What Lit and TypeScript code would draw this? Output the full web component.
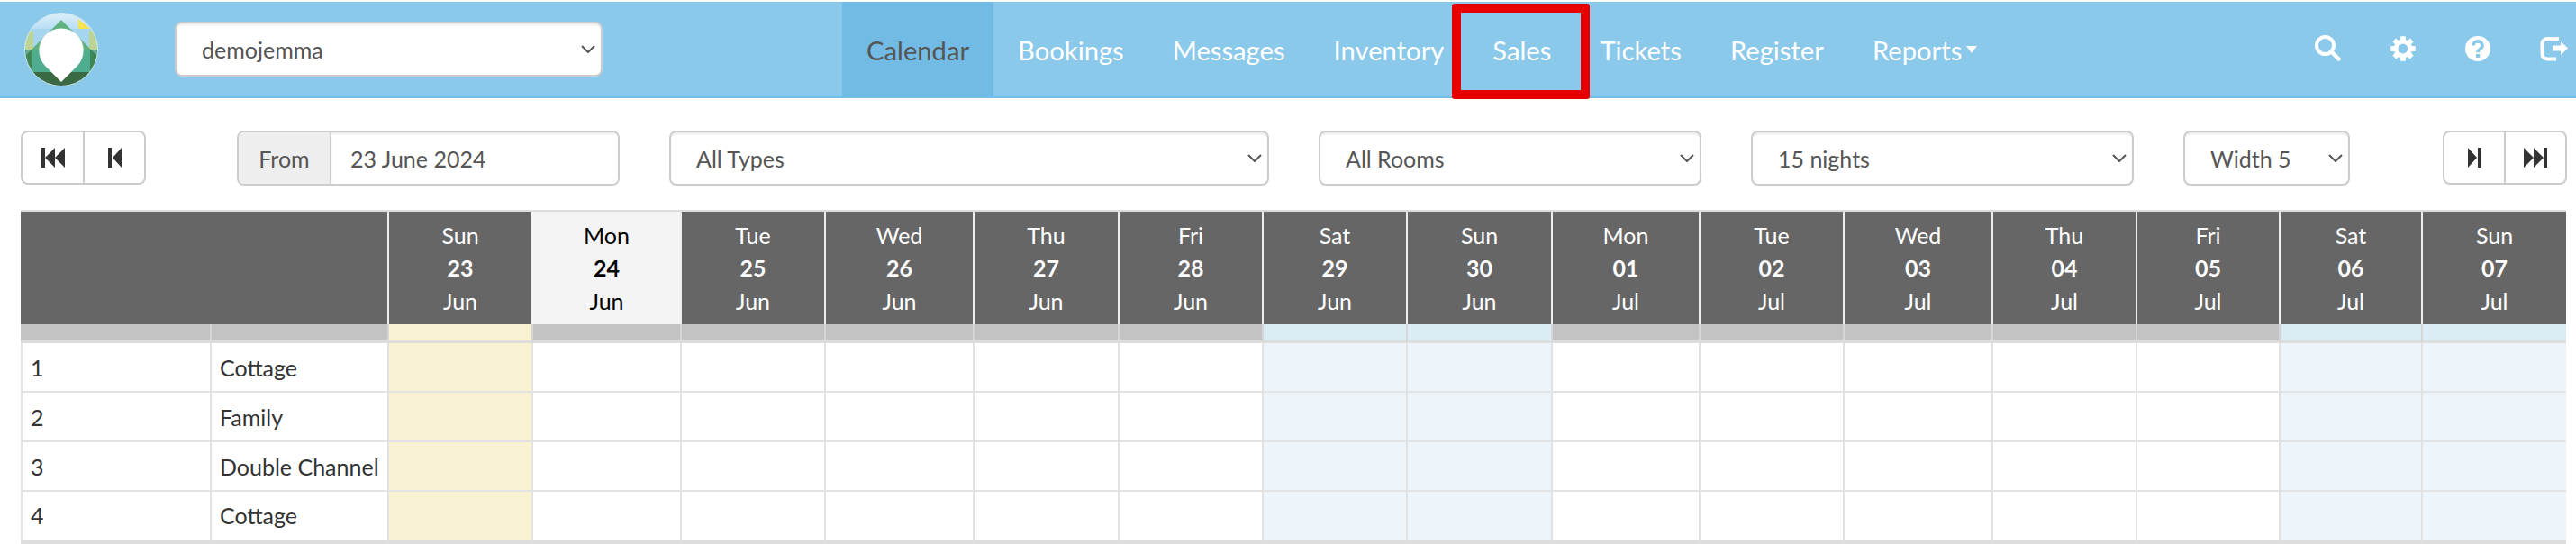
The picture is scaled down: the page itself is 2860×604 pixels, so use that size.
import { LitElement, html, css, svg } from 'lit';
import { customElement } from 'lit/decorators.js';

const NAV = ['Calendar', 'Bookings', 'Messages', 'Inventory', 'Sales', 'Tickets', 'Register', 'Reports'];

// Column widths, measured from the screen
const ROOM_WIDTHS = [210, 197];
const DAYS = [
	{ dow: 'Sun', num: '23', mon: 'Jun', w: 160, kind: 'first' },
	{ dow: 'Mon', num: '24', mon: 'Jun', w: 165, kind: 'today' },
	{ dow: 'Tue', num: '25', mon: 'Jun', w: 160, kind: '' },
	{ dow: 'Wed', num: '26', mon: 'Jun', w: 165, kind: '' },
	{ dow: 'Thu', num: '27', mon: 'Jun', w: 161, kind: '' },
	{ dow: 'Fri', num: '28', mon: 'Jun', w: 160, kind: '' },
	{ dow: 'Sat', num: '29', mon: 'Jun', w: 160, kind: 'weekend' },
	{ dow: 'Sun', num: '30', mon: 'Jun', w: 161, kind: 'weekend' },
	{ dow: 'Mon', num: '01', mon: 'Jul', w: 164, kind: '' },
	{ dow: 'Tue', num: '02', mon: 'Jul', w: 160, kind: '' },
	{ dow: 'Wed', num: '03', mon: 'Jul', w: 165, kind: '' },
	{ dow: 'Thu', num: '04', mon: 'Jul', w: 160, kind: '' },
	{ dow: 'Fri', num: '05', mon: 'Jul', w: 159, kind: '' },
	{ dow: 'Sat', num: '06', mon: 'Jul', w: 158, kind: 'weekend' },
	{ dow: 'Sun', num: '07', mon: 'Jul', w: 161, kind: 'weekend' },
];
const ROOMS = [
	{ id: '1', type: 'Cottage' },
	{ id: '2', type: 'Family' },
	{ id: '3', type: 'Double Channel' },
	{ id: '4', type: 'Cottage' },
];

// Builds the outline of the settings cog
const cogPath = () => {
	const cx = 14, cy = 14, teeth = 8;
	let d = '';
	for (let i = 0; i < teeth; i++) {
		const a = (i * 2 * Math.PI) / teeth - Math.PI / 2;
		const pts: [number, number][] = [
			[10.2, -0.3], [14, -0.19], [14, 0.19], [10.2, 0.3],
		];
		pts.forEach(([r, o], j) => {
			const x = (cx + r * Math.cos(a + o)).toFixed(2);
			const y = (cy + r * Math.sin(a + o)).toFixed(2);
			d += `${i === 0 && j === 0 ? 'M' : 'L'}${x} ${y} `;
		});
	}
	d += 'Z M19.4 14 A5.4 5.4 0 1 0 8.6 14 A5.4 5.4 0 1 0 19.4 14 Z';
	return d;
};

const chevron = html`<svg class="chevron" viewBox="0 0 16 9" width="16" height="9">
	<path d="M1 1 L8 8 L15 1" fill="none" stroke="#555" stroke-width="2"></path>
</svg>`;

const stepIcon = (flip: boolean) => html`<svg class="skip ${flip ? 'flip' : ''}" viewBox="0 0 15 22" width="15" height="22">
	<path d="M0 0 L10 11 L0 22 Z M11 0 H15 V22 H11 Z" fill="#333"></path>
</svg>`;

const fastIcon = (flip: boolean) => html`<svg class="skip ${flip ? 'flip' : ''}" viewBox="0 0 26 22" width="26" height="22">
	<path d="M0 0 L11 11 L0 22 Z M11 0 L22 11 L11 22 Z M22 0 H26 V22 H22 Z" fill="#333"></path>
</svg>`;

@customElement('app-root')
export class AppRoot extends LitElement {
	static styles = css`
		:host {
			display: block;
			padding-top: 2px;
			background: #fff;
			font-family: Lato, "Open Sans", sans-serif;
			font-size: 25px;
			color: #333;
		}
		select, input {
			font-family: inherit;
		}

		/* Top bar */
		.navbar {
			display: flex;
			align-items: center;
			height: 105px;
			padding-left: 27px;
			background: #8bc9ea;
			border-bottom: 2px solid #74bce4;
			box-sizing: content-box;
		}
		.logo {
			flex: none;
			display: block;
		}
		.property {
			width: 475px;
			height: 61px;
			margin-left: 85px;
			flex: none;
		}
		.nav {
			display: flex;
			align-self: stretch;
			margin-left: 266px;
		}
		.nav-item {
			position: relative;
			display: flex;
			align-items: center;
			padding: 1px 27px 0;
			color: #fff;
			font-size: 29.2px;
		}
		.nav-item.active {
			background: #72bbe4;
			color: #555;
		}
		.caret {
			width: 0;
			height: 0;
			margin-left: 5px;
			border-left: 6.5px solid transparent;
			border-right: 6.5px solid transparent;
			border-top: 8px solid #fff;
		}
		.highlight {
			position: absolute;
			top: 2px;
			bottom: -3px;
			left: -18px;
			right: -16px;
			border: 10px solid #e60000;
			border-radius: 3px;
			box-sizing: border-box;
		}
		.tools {
			display: flex;
			align-items: center;
			gap: 55px;
			margin-left: auto;
			padding-right: 9px;
			margin-top: -2px;
		}
		.tools svg {
			display: block;
		}

		/* Filter row */
		.filters {
			display: flex;
			gap: 55px;
			padding: 36px 11px 27px 23px;
		}
		.select-wrap {
			position: relative;
			flex: none;
			box-sizing: border-box;
		}
		.select-wrap select {
			width: 100%;
			height: 100%;
			padding: 0 28px;
			appearance: none;
			background: #fff;
			border: 2px solid #ccc;
			border-radius: 8px;
			box-shadow: inset 0 2px 2px rgba(0, 0, 0, 0.075);
			font-size: 25px;
			color: #555;
			box-sizing: border-box;
		}
		.filters .select-wrap {
			height: 61px;
		}
		.chevron {
			position: absolute;
			right: 8px;
			top: 50%;
			margin-top: -5px;
			pointer-events: none;
		}
		.btn-group {
			display: flex;
			flex: none;
			height: 60px;
			border: 2px solid #ccc;
			border-radius: 8px;
			box-sizing: border-box;
		}
		.btn-group.back {
			width: 139px;
		}
		.btn-group.next {
			width: 138px;
			margin-left: 48px;
		}
		.btn {
			display: flex;
			align-items: center;
			justify-content: center;
		}
		.btn + .btn {
			border-left: 2px solid #ccc;
		}
		.back .btn:first-child { width: 67px; }
		.back .btn:last-child { flex: 1; }
		.next .btn:first-child { width: 66px; }
		.next .btn:last-child { flex: 1; }
		.skip {
			display: block;
		}
		.skip.flip {
			transform: scaleX(-1);
		}
		.from {
			display: flex;
			flex: none;
			width: 425px;
			height: 61px;
			margin-left: 46px;
			border: 2px solid #ccc;
			border-radius: 8px;
			box-sizing: border-box;
			overflow: hidden;
		}
		.from-label {
			display: flex;
			align-items: center;
			justify-content: center;
			width: 101px;
			flex: none;
			background: #eee;
			border-right: 2px solid #ccc;
			color: #555;
		}
		.from input {
			flex: 1;
			min-width: 0;
			padding: 0 21px;
			border: none;
			outline: none;
			box-shadow: inset 0 2px 2px rgba(0, 0, 0, 0.075);
			font-size: 25px;
			color: #555;
		}
		.w-types { width: 666px; }
		.w-rooms { width: 425px; }
		.w-nights { width: 425px; }
		.w-width { width: 185px; }

		/* Calendar grid */
		.table-wrap {
			padding: 0 12px 0 23px;
		}
		table {
			table-layout: fixed;
			width: 2825px;
			border-collapse: separate;
			border-spacing: 0;
			border-top: 2px solid #ddd;
			box-sizing: border-box;
		}
		th, td {
			padding: 0;
			box-sizing: border-box;
			font-weight: 400;
		}
		.head th {
			height: 125px;
			background: #666;
			color: #fff;
			text-align: center;
			line-height: 36.5px;
			border-left: 2px solid #eee;
		}
		.head th:first-child {
			border-left: none;
		}
		.head th.today {
			background: #f4f4f4;
			color: #000;
			border-left: 2px solid #f4f4f4;
		}
		.head th .num {
			display: block;
			font-weight: 700;
		}
		.head th .line {
			display: block;
		}
		.sub td {
			height: 21px;
			background: #c3c3c3;
			border-left: 2px solid #d6d6d6;
			border-bottom: 3px solid #ddd;
		}
		.sub td:first-child {
			border-left: none;
		}
		.sub td.first {
			background: #f8f1d2;
		}
		.sub td.weekend {
			background: #dcecf4;
		}
		.room td {
			height: 55px;
			border-left: 2px solid #e2e2e2;
			border-bottom: 2px solid #e2e2e2;
			color: #333;
		}
		.room td:first-child {
			border-left: 2px solid #e2e2e2;
		}
		.room td.label {
			padding-left: 9px;
			white-space: nowrap;
		}
		.room td.first {
			background: #f8f1d2;
		}
		.room td.weekend {
			background: #edf5fa;
		}
		.room:last-child td {
			height: 58px;
			border-bottom: 4px solid #ddd;
			padding-bottom: 2px;
		}
	`;

	private _renderLogo() {
		return html`<svg class="logo" viewBox="27 12 82 82" width="82" height="82">
			${svg`
			<defs>
				<clipPath id="disc"><circle cx="68" cy="53" r="40.5"></circle></clipPath>
				<linearGradient id="sky" x1="0" y1="0" x2="0" y2="1">
					<stop offset="0" stop-color="#dff0fb"></stop>
					<stop offset="1" stop-color="#b8def5"></stop>
				</linearGradient>
			</defs>
			<g clip-path="url(#disc)">
				<rect x="27" y="12" width="82" height="18" fill="url(#sky)"></rect>
				<rect x="27" y="30" width="82" height="23" fill="#a5d5ef"></rect>
				<rect x="27" y="32" width="10" height="21" fill="#bcd594"></rect>
				<rect x="99" y="32" width="10" height="21" fill="#bcd594"></rect>
				<path d="M87 19 L100 30 H87 Z" fill="#f5e44c"></path>
				<rect x="27" y="53" width="82" height="41" fill="#3f8656"></rect>
				<path d="M68 20 L101 53 H35 Z" fill="#5fb27f"></path>
				<path d="M35 53 L29 59 V53 Z M101 53 L107 59 V53 Z" fill="#6aa99a"></path>
				<rect x="36" y="53" width="64" height="25" fill="#4fad8f"></rect>
				<rect x="27" y="78" width="82" height="16" fill="#3a6a44"></rect>
			</g>
			<circle cx="68" cy="53" r="40.5" fill="none" stroke="#d6e9ee" stroke-width="1"></circle>
			<path d="M68 89 L50 71 A24.7 24.7 0 1 1 86 71 Z" fill="#fff"></path>
			`}
		</svg>`;
	}

	private _renderSelect(cls: string, value: string) {
		return html`<div class="select-wrap ${cls}">
			<select><option>${value}</option></select>
			${chevron}
		</div>`;
	}

	private _renderTools() {
		return html`<div class="tools">
			<svg viewBox="0 0 29 29" width="29" height="29">
				<circle cx="11.5" cy="11.5" r="9.5" fill="none" stroke="#fff" stroke-width="4"></circle>
				<path d="M18.5 18.5 L26.5 26.5" stroke="#fff" stroke-width="4.5" stroke-linecap="round"></path>
			</svg>
			<svg viewBox="0 0 28 28" width="28" height="28">
				<path d="${cogPath()}" fill="#fff" fill-rule="evenodd"></path>
			</svg>
			<svg viewBox="0 0 28 28" width="28" height="28">
				<circle cx="14" cy="14" r="14" fill="#fff"></circle>
				<path d="M9 10.5 a5 4.6 0 1 1 7.8 3.8 c-1.8 1.2 -2.8 2 -2.8 3.9" fill="none" stroke="#8bc9ea" stroke-width="3.6"></path>
				<rect x="12" y="20" width="4.2" height="4" fill="#8bc9ea"></rect>
			</svg>
			<svg viewBox="0 0 31 28" width="31" height="28">
				<path d="M21 3 H8 a5.5 5.5 0 0 0 -5.5 5.5 V20 a5.5 5.5 0 0 0 5.5 5.5 H18" fill="none" stroke="#fff" stroke-width="4"></path>
				<path d="M14 10.5 H23 V6 L31 13.5 L23 21 V16.5 H14 Z" fill="#fff"></path>
			</svg>
		</div>`;
	}

	render() {
		return html`
			<header class="navbar">
				${this._renderLogo()}
				${this._renderSelect('property', 'demojemma')}
				<nav class="nav">
					${NAV.map(item => html`
						<div class="nav-item ${item === 'Calendar' ? 'active' : ''}">
							${item}
							${item === 'Reports' ? html`<span class="caret"></span>` : ''}
							${item === 'Sales' ? html`<span class="highlight"></span>` : ''}
						</div>
					`)}
				</nav>
				${this._renderTools()}
			</header>

			<section class="filters">
				<div class="btn-group back">
					<div class="btn">${fastIcon(true)}</div>
					<div class="btn">${stepIcon(true)}</div>
				</div>
				<div class="from">
					<span class="from-label">From</span>
					<input type="text" .value="${'23 June 2024'}" />
				</div>
				${this._renderSelect('w-types', 'All Types')}
				${this._renderSelect('w-rooms', 'All Rooms')}
				${this._renderSelect('w-nights', '15 nights')}
				${this._renderSelect('w-width', 'Width 5')}
				<div class="btn-group next">
					<div class="btn">${stepIcon(false)}</div>
					<div class="btn">${fastIcon(false)}</div>
				</div>
			</section>

			<div class="table-wrap">
				<table>
					<colgroup>
						${ROOM_WIDTHS.map(w => html`<col style="width:${w}px" />`)}
						${DAYS.map(d => html`<col style="width:${d.w}px" />`)}
					</colgroup>
					<thead>
						<tr class="head">
							<th colspan="2"></th>
							${DAYS.map(d => html`
								<th class="${d.kind}">
									<span class="line">${d.dow}</span>
									<span class="num">${d.num}</span>
									<span class="line">${d.mon}</span>
								</th>
							`)}
						</tr>
						<tr class="sub">
							<td></td><td></td>
							${DAYS.map(d => html`<td class="${d.kind}"></td>`)}
						</tr>
					</thead>
					<tbody>
						${ROOMS.map(r => html`
							<tr class="room">
								<td class="label">${r.id}</td>
								<td class="label">${r.type}</td>
								${DAYS.map(d => html`<td class="${d.kind}"></td>`)}
							</tr>
						`)}
					</tbody>
				</table>
			</div>
		`;
	}
}
